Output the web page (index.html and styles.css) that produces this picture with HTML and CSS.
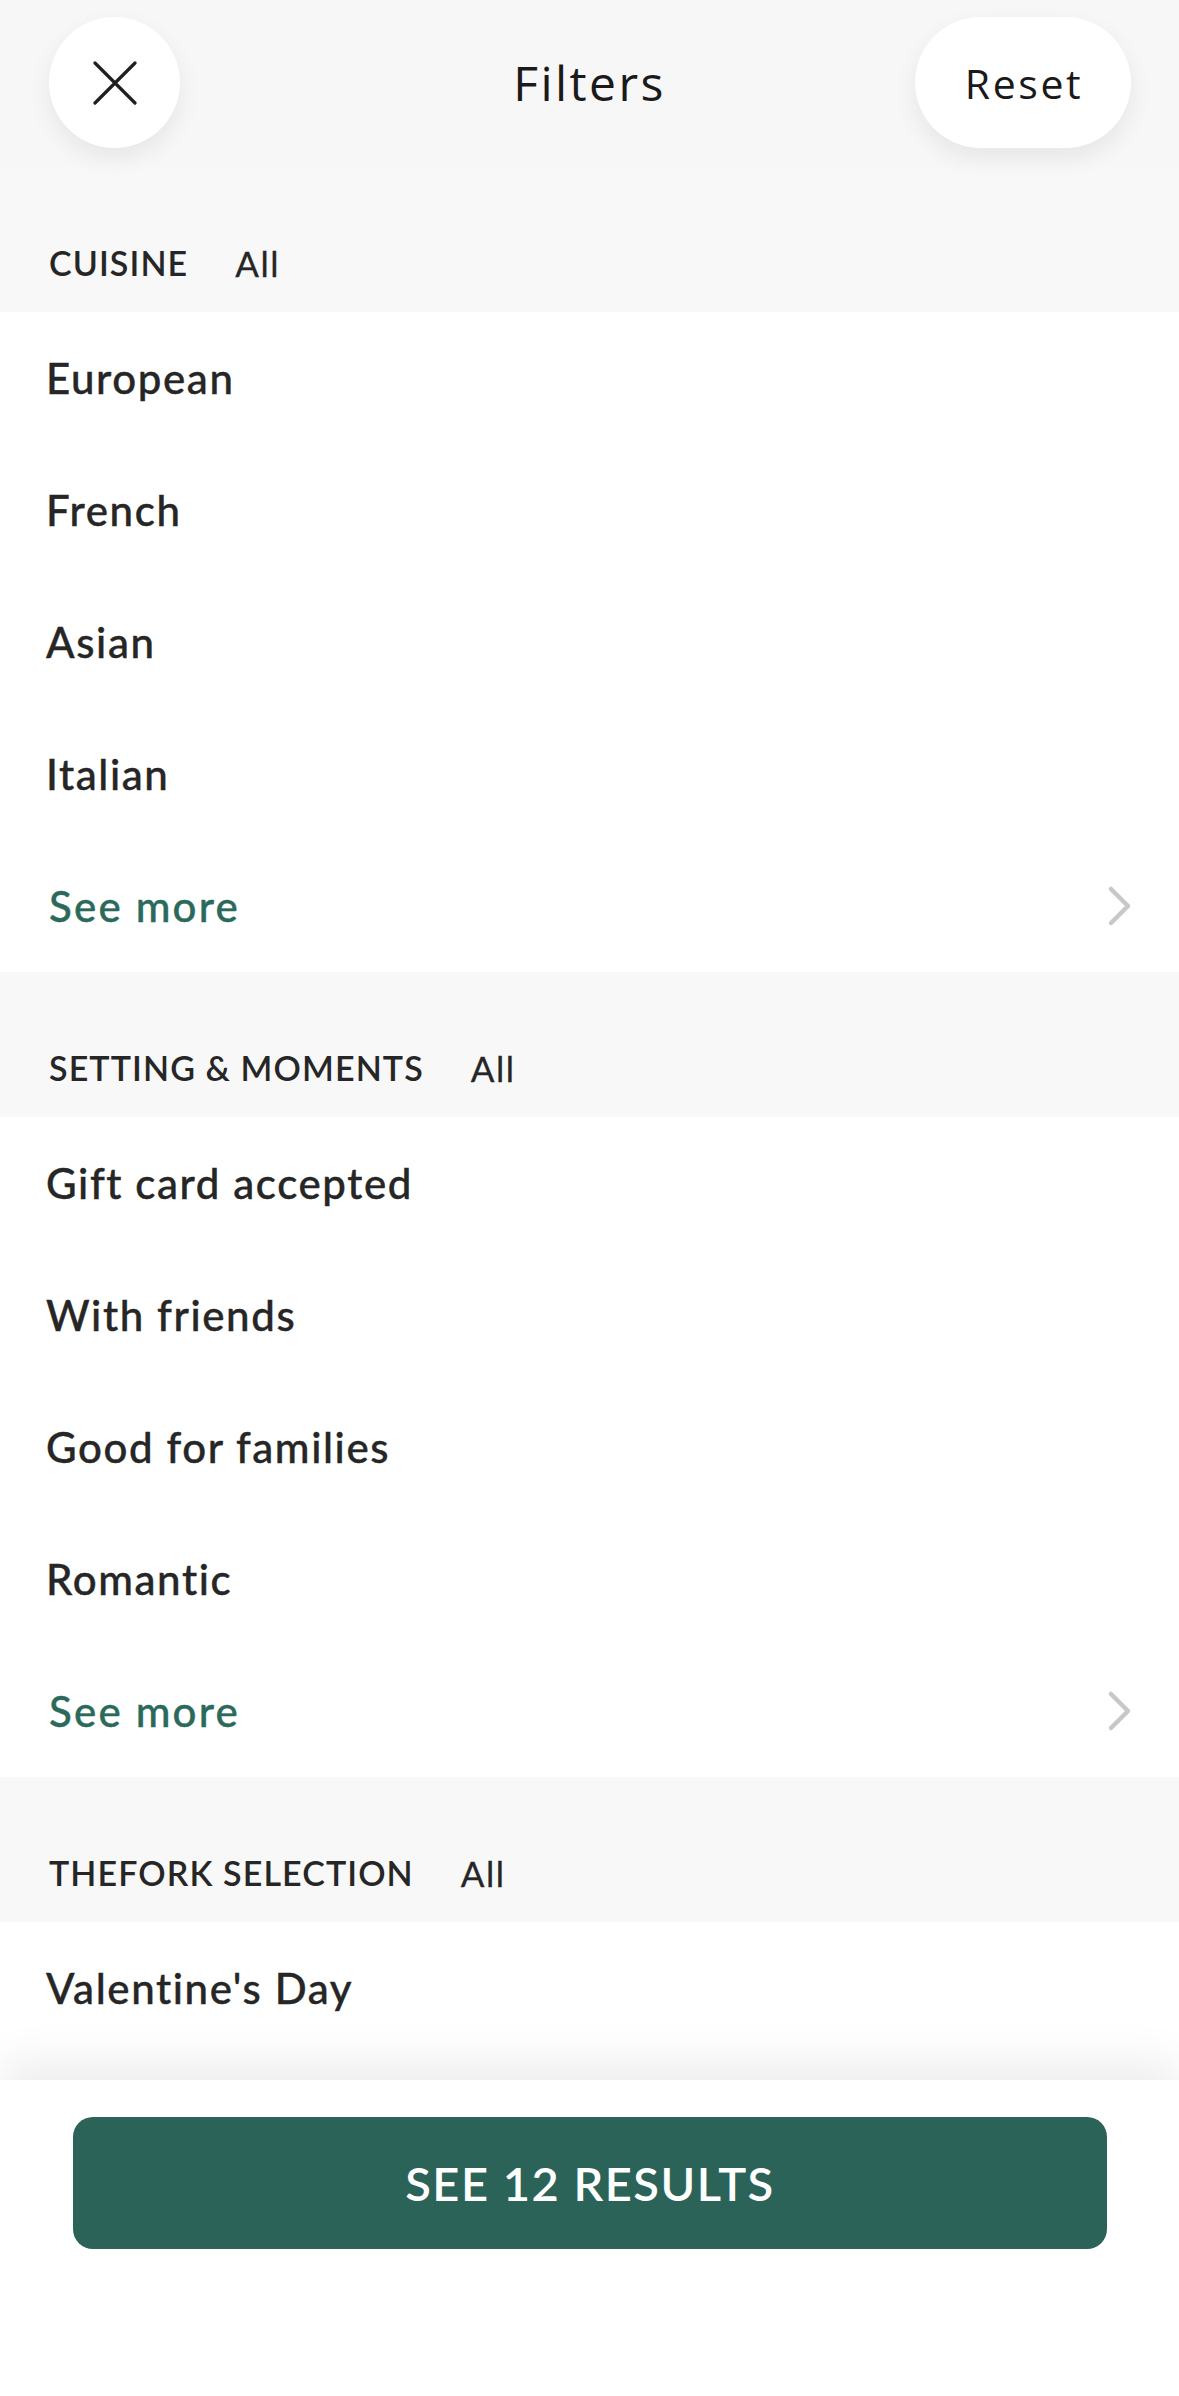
FILE: index.html
```html
<!DOCTYPE html>
<html lang="en">

<head>
    <meta charset="UTF-8">
    <meta name="viewport" content="width=device-width, initial-scale=1.0">
    <title>Filters</title>
    <link rel="stylesheet" href="styles.css">
</head>

<body>
    <div class="screen">
        <div class="content">
            <div class="topbar">
                <div class="round-btn close-btn">
                    <svg width="44" height="44" viewBox="0 0 44 44">
                        <path d="M2 2 L42 42 M42 2 L2 42" stroke="#1f1f1f" stroke-width="3.2" stroke-linecap="round" fill="none"/>
                    </svg>
                </div>
                <div class="title">Filters</div>
                <div class="round-btn reset-btn">Reset</div>
            </div>

            <!-- cuisine -->
            <div class="sect-head">
                <span class="sect-name">CUISINE</span>
                <span class="sect-all">All</span>
            </div>
            <ul class="opts">
                <li>European</li>
                <li>French</li>
                <li>Asian</li>
                <li>Italian</li>
                <li class="more">
                    <span>See more</span>
                    <svg width="26" height="42" viewBox="0 0 26 42">
                        <path d="M4 4 L21 21 L4 38" stroke="#c8c8c8" stroke-width="4.5" stroke-linecap="round" stroke-linejoin="round" fill="none"/>
                    </svg>
                </li>
            </ul>

            <!-- setting -->
            <div class="sect-head">
                <span class="sect-name">SETTING &amp; MOMENTS</span>
                <span class="sect-all">All</span>
            </div>
            <ul class="opts">
                <li>Gift card accepted</li>
                <li>With friends</li>
                <li>Good for families</li>
                <li>Romantic</li>
                <li class="more">
                    <span>See more</span>
                    <svg width="26" height="42" viewBox="0 0 26 42">
                        <path d="M4 4 L21 21 L4 38" stroke="#c8c8c8" stroke-width="4.5" stroke-linecap="round" stroke-linejoin="round" fill="none"/>
                    </svg>
                </li>
            </ul>

            <!-- thefork selection -->
            <div class="sect-head">
                <span class="sect-name">THEFORK SELECTION</span>
                <span class="sect-all">All</span>
            </div>
            <ul class="opts">
                <li>Valentine's Day</li>
            </ul>
        </div>

        <div class="footer">
            <div class="results-btn">SEE 12 RESULTS</div>
        </div>
    </div>
</body>

</html>
```

FILE: styles.css
```css
* {
    margin: 0;
    padding: 0;
    box-sizing: border-box;
}

body {
    background: #fff;
    font-family: Lato, "Noto Sans", sans-serif;
    color: #262626;
}

li {
    list-style: none;
}

.screen {
    width: 1179px;
    height: 2396px;
    display: flex;
    flex-direction: column;
    overflow: hidden;
}

.content {
    height: 2080px;
    flex-shrink: 0;
    overflow: hidden;
    background: #fff;
}

/* top bar */
.topbar {
    height: 167px;
    background: #f7f7f7;
    padding: 17px 48px 0 49px;
    display: flex;
    justify-content: space-between;
    align-items: flex-start;
    position: relative;
}

.round-btn {
    height: 131px;
    background: #fff;
    border-radius: 66px;
    box-shadow: 0 10px 24px rgba(0, 0, 0, 0.07);
    display: flex;
    align-items: center;
    justify-content: center;
}

.close-btn {
    width: 131px;
}

.reset-btn {
    width: 216px;
    font-family: "Open Sans", "Noto Sans", sans-serif;
    font-size: 41px;
    color: #1a1a1a;
    letter-spacing: 2.6px;
    padding-left: 2px;
}

.title {
    position: absolute;
    left: 0;
    right: 0;
    top: 50px;
    text-align: center;
    font-family: "Open Sans", "Noto Sans", sans-serif;
    font-size: 48px;
    color: #1a1a1a;
    letter-spacing: 2.4px;
    pointer-events: none;
}

/* section header */
.sect-head {
    height: 145px;
    background: #f8f8f8;
    display: flex;
    align-items: flex-end;
    gap: 47px;
    padding: 0 0 29px 49px;
    font-size: 34px;
    line-height: 40px;
    color: #262626;
}

.sect-name {
    font-weight: 600;
    letter-spacing: 1.1px;
}

.sect-all {
    font-size: 35px;
    letter-spacing: 1.5px;
    -webkit-text-stroke: 0.3px #262626;
}

/* options */
.opts li {
    height: 132px;
    display: flex;
    align-items: center;
    padding: 0 49px 0 46px;
    font-size: 42px;
    font-weight: 500;
    letter-spacing: 1.6px;
    -webkit-text-stroke: 0.4px #262626;
}

.opts li.more {
    justify-content: space-between;
    color: #2b6a5b;
    -webkit-text-stroke: 0.4px #2b6a5b;
    padding-left: 49px;
    font-size: 42px;
    letter-spacing: 2.2px;
}

.opts li.more svg {
    margin-right: -3px;
}

/* footer */
.footer {
    flex: 1;
    background: #fff;
    position: relative;
    box-shadow: 0 -16px 44px rgba(0, 0, 0, 0.08);
    padding: 37px 72px 0 73px;
}

.results-btn {
    height: 132px;
    background: #2c6359;
    border-radius: 20px;
    color: #fff;
    font-size: 47px;
    font-weight: 600;
    letter-spacing: 1.5px;
    display: flex;
    align-items: center;
    justify-content: center;
}
```
